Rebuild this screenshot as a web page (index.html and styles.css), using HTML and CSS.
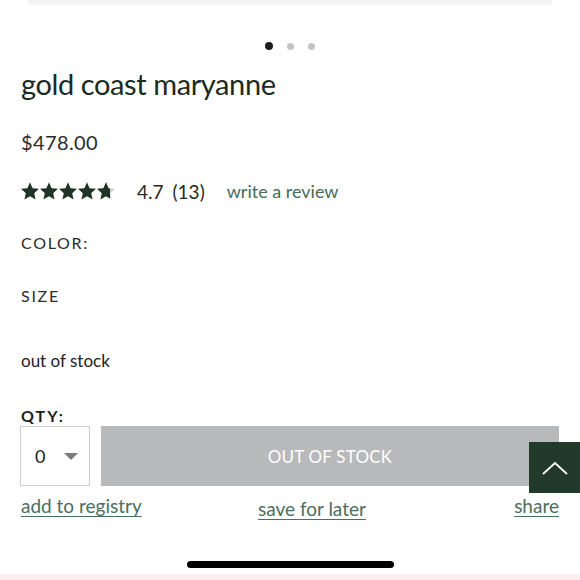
FILE: index.html
```html
<!DOCTYPE html>
<html lang="en">
<head>
<meta charset="utf-8">
<title>gold coast maryanne</title>
<link rel="stylesheet" href="styles.css">
</head>
<body>
<div class="page">
  <div class="hero-strip"></div>
  <div class="dots">
    <span class="dot active"></span>
    <span class="dot"></span>
    <span class="dot"></span>
  </div>
  <main class="product">
    <h1 class="title">gold coast maryanne</h1>
    <div class="price">$478.00</div>
    <div class="rating">
      <svg class="stars" width="96" height="18" viewBox="0 0 96 18" aria-hidden="true">
        <defs>
          <path id="star" d="M9 0.3L11.59 6.24L18 6.86L13.18 11.16L14.58 17.49L9 14.2L3.42 17.49L4.82 11.16L0 6.86L6.41 6.24Z"/>
          <clipPath id="part"><rect x="0" y="0" width="13" height="18"/></clipPath>
        </defs>
        <use href="#star" x="0" fill="#1f3327"/>
        <use href="#star" x="19" fill="#1f3327"/>
        <use href="#star" x="38" fill="#1f3327"/>
        <use href="#star" x="57" fill="#1f3327"/>
        <g transform="translate(76 0)">
          <use href="#star" fill="#cdcdcd"/>
          <g clip-path="url(#part)"><use href="#star" fill="#1f3327"/></g>
        </g>
      </svg>
      <span class="score">4.7</span>
      <span class="count">(13)</span>
      <a class="review-link" href="#">write a review</a>
    </div>
    <div class="label color-label">COLOR:</div>
    <div class="label size-label">SIZE</div>
    <div class="stock">out of stock</div>
    <div class="qty-label">QTY:</div>
    <div class="buy-row">
      <div class="qty-box">
        <span class="qty-val">0</span>
        <span class="caret"></span>
      </div>
      <button class="oos-btn" type="button">OUT OF STOCK</button>
    </div>
    <div class="links">
      <a href="#" class="link">add to registry</a>
      <a href="#" class="link mid">save for later</a>
      <a href="#" class="link">share</a>
    </div>
  </main>
  <button class="to-top" type="button" aria-label="back to top">
    <svg width="28" height="16" viewBox="0 0 28 16"><polyline points="2,14 14,3 26,14" fill="none" stroke="#fff" stroke-width="1.8"/></svg>
  </button>
  <div class="home-area"><span class="home-bar"></span></div>
  <div class="pink-strip"></div>
</div>
</body>
</html>
```

FILE: styles.css
```css
html, body {
  margin: 0;
  padding: 0;
  background: #fff;
}
body {
  font-family: Lato, "Open Sans", "Liberation Sans", sans-serif;
  color: #222;
}
.page {
  position: relative;
  width: 580px;
  height: 580px;
  overflow: hidden;
}
.hero-strip {
  height: 5px;
  margin: 0 28px;
  background: #f4f4f4;
}
.dots {
  display: flex;
  justify-content: center;
  align-items: center;
  gap: 14px;
  margin-top: 37px;
  height: 8px;
}
.dot {
  width: 7px;
  height: 7px;
  border-radius: 50%;
  background: #c4c4c4;
}
.dot.active {
  width: 8px;
  height: 8px;
  background: #1d1d1d;
}
.product {
  padding: 0 21px;
}
.title {
  margin: 16px 0 0;
  font-size: 29px;
  line-height: 36px;
  font-weight: 400;
  color: #1b2a22;
  letter-spacing: -0.4px;
}
.price {
  margin-top: 28px;
  font-size: 20px;
  line-height: 24px;
  color: #2c2c2c;
  letter-spacing: 0.4px;
}
.rating {
  display: flex;
  align-items: center;
  margin-top: 26px;
  height: 22px;
  font-size: 19px;
  color: #1f2b25;
}
.stars {
  display: block;
  margin-right: 20px;
}
.score {
  margin-right: 9px;
}
.count {
  margin-right: 22px;
}
.review-link {
  color: #476b5c;
  text-decoration: none;
  font-size: 18px;
}
.label {
  font-size: 16px;
  line-height: 20px;
  letter-spacing: 1.7px;
  color: #2b2b2b;
}
.color-label {
  margin-top: 31px;
}
.size-label {
  margin-top: 33px;
}
.stock {
  margin-top: 44px;
  font-size: 17px;
  line-height: 22px;
  color: #222;
}
.qty-label {
  margin-top: 34px;
  font-size: 16px;
  line-height: 20px;
  font-weight: 700;
  letter-spacing: 2px;
  color: #1d1d1d;
}
.buy-row {
  display: flex;
  gap: 11px;
  width: 539px;
  margin-left: -1px;
}
.qty-box {
  box-sizing: border-box;
  width: 70px;
  height: 60px;
  border: 1.5px solid #cfcfcf;
  display: flex;
  align-items: center;
  padding-left: 14px;
}
.qty-val {
  font-size: 18px;
  color: #222;
}
.caret {
  margin-left: 19px;
  width: 0;
  height: 0;
  border-left: 7px solid transparent;
  border-right: 7px solid transparent;
  border-top: 7px solid #7a7a7a;
}
.oos-btn {
  flex: 1;
  height: 60px;
  border: 0;
  background: #b8b9bb;
  color: #fff;
  font-family: inherit;
  font-size: 17px;
  letter-spacing: 0.2px;
  padding: 0;
}
.links {
  display: flex;
  justify-content: space-between;
  align-items: flex-start;
  width: 538px;
  margin-top: 8px;
}
.link {
  color: #4a6e5f;
  font-size: 19px;
  line-height: 24px;
  text-decoration: underline;
  text-underline-offset: 3px;
  text-decoration-thickness: 1px;
}
.link.mid {
  margin-top: 3px;
  margin-right: 32px;
}
.to-top {
  position: absolute;
  right: 0;
  top: 442px;
  width: 51px;
  height: 51px;
  border: 0;
  padding: 0;
  background: #213a2b;
  display: flex;
  align-items: center;
  justify-content: center;
}
.home-area {
  position: absolute;
  left: 0;
  right: 0;
  bottom: 6px;
  height: 19px;
  display: flex;
  justify-content: center;
  align-items: center;
}
.home-bar {
  width: 207px;
  height: 7px;
  border-radius: 4px;
  background: #000;
}
.pink-strip {
  position: absolute;
  left: 0;
  right: 0;
  bottom: 0;
  height: 6px;
  background: #fbeff2;
}
```
